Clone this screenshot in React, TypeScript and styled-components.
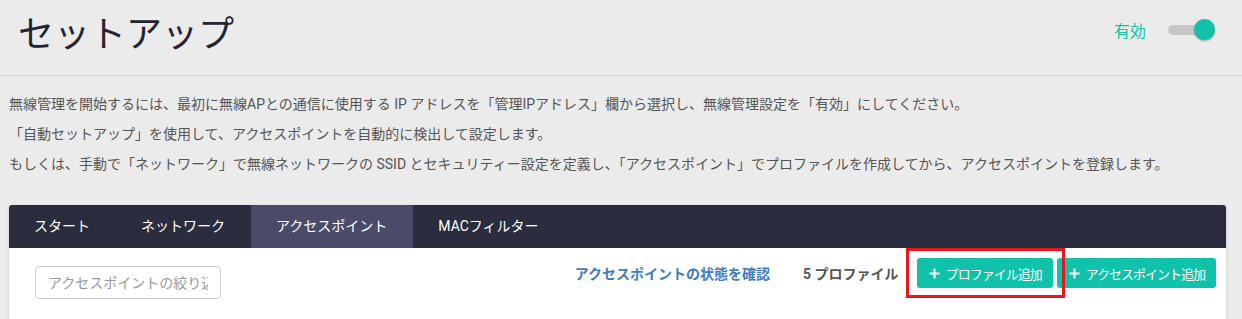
import React, { useState } from "react";
import styled, { createGlobalStyle } from "styled-components";

const GlobalStyle = createGlobalStyle`
    body {
        margin: 0;
        background: #ebebeb;
        font-family: Roboto, "Noto Sans CJK JP", sans-serif;
        color: #555;
    }
`;

const Header = styled.header`
    height: 75px;
    display: flex;
    justify-content: space-between;
    align-items: flex-start;
    border-bottom: 1px solid #cdcdcd;
    padding: 0 26px 0 18px;
`;

const Title = styled.h1`
    margin: 17px 0 0;
    font-size: 36px;
    line-height: 36px;
    font-weight: 400;
    color: #232333;
`;

const ToggleGroup = styled.div`
    display: flex;
    align-items: center;
    gap: 22px;
    margin-top: 19px;
    height: 22px;
`;

const ToggleLabel = styled.span`
    font-size: 16px;
    color: #17bfa5;
`;

const Switch = styled.div`
    position: relative;
    width: 48px;
    height: 22px;
    cursor: pointer;
`;

const Track = styled.div<{ $on: boolean }>`
    position: absolute;
    left: 0;
    top: 6px;
    width: 45px;
    height: 10px;
    border-radius: 5px;
    background: #c6c6c6;
`;

const Knob = styled.div<{ $on: boolean }>`
    position: absolute;
    top: 0;
    left: ${(p) => (p.$on ? "26px" : "0")};
    width: 21px;
    height: 21px;
    border-radius: 50%;
    background: ${(p) => (p.$on ? "#10c2a9" : "#fafafa")};
    box-shadow: 0 1px 2px rgba(0, 0, 0, 0.35);
`;

const Intro = styled.div`
    padding: 13px 9px 0;
    font-size: 14px;
    line-height: 30px;
    color: #555;
`;

const Line = styled.p`
    margin: 0;
    white-space: nowrap;
`;

const Card = styled.section`
    margin: 26px 16px 0 9px;
    background: #fff;
    border-radius: 3px 3px 0 0;
    box-shadow: 0 1px 3px rgba(0, 0, 0, 0.18);
    min-height: 130px;
    overflow: hidden;
`;

const TabBar = styled.nav`
    display: flex;
    height: 43px;
    background: #2b2c3e;
`;

const Tab = styled.div<{ $active?: boolean }>`
    padding: 0 26px 0 25px;
    line-height: 43px;
    font-size: 14px;
    color: #fff;
    background: ${(p) => (p.$active ? "#494b69" : "transparent")};
    cursor: pointer;
`;

const Toolbar = styled.div`
    display: flex;
    align-items: flex-start;
    padding: 10px 10px 0 26px;
`;

const Search = styled.input`
    box-sizing: border-box;
    margin-top: 8px;
    width: 186px;
    height: 33px;
    padding: 0 12px;
    border: 1px solid #ccc;
    border-radius: 4px;
    font: inherit;
    font-size: 14px;
    color: #555;
    &::placeholder {
        color: #999;
    }
`;

const Actions = styled.div`
    margin-left: auto;
    display: flex;
    align-items: center;
    height: 30px;
`;

const StatusLink = styled.a`
    font-size: 14px;
    font-weight: 700;
    color: #3d7bbd;
    text-decoration: none;
    margin-right: 33px;
`;

const Count = styled.span`
    font-size: 14px;
    font-weight: 700;
    color: #555;
    margin-right: 18px;
`;

const Highlight = styled.div`
    position: relative;
    margin-right: 4px;
    &::after {
        content: "";
        position: absolute;
        left: -11px;
        right: -12px;
        top: -10px;
        bottom: -10px;
        border: 3px solid #e8151f;
        pointer-events: none;
        z-index: 2;
    }
`;

const AddButton = styled.button`
    display: flex;
    align-items: center;
    gap: 6px;
    height: 30px;
    padding: 0 11px 0 12px;
    border: none;
    border-radius: 3px;
    background: #10c2a9;
    color: #fff;
    font: inherit;
    font-size: 13px;
    letter-spacing: -1px;
    cursor: pointer;
    white-space: nowrap;
`;

const PlusIcon = () => (
    <svg width="11" height="11" viewBox="0 0 11 11">
        <path d="M5.5 0.5v10M0.5 5.5h10" stroke="#fff" strokeWidth="2" />
    </svg>
);

const tabs = ["スタート", "ネットワーク", "アクセスポイント", "MACフィルター"];

const App = () => {
    const [enabled, setEnabled] = useState(true);
    const [activeTab, setActiveTab] = useState(2);

    return (
        <>
            <GlobalStyle />
            <Header>
                <Title>セットアップ</Title>
                <ToggleGroup>
                    <ToggleLabel>有効</ToggleLabel>
                    <Switch onClick={() => setEnabled(!enabled)}>
                        <Track $on={enabled} />
                        <Knob $on={enabled} />
                    </Switch>
                </ToggleGroup>
            </Header>
            <Intro>
                <Line>
                    無線管理を開始するには、最初に無線APとの通信に使用する IP アドレスを「管理IPアドレス」欄から選択し、無線管理設定を「有効」にしてください。
                </Line>
                <Line>「自動セットアップ」を使用して、アクセスポイントを自動的に検出して設定します。</Line>
                <Line>
                    もしくは、手動で「ネットワーク」で無線ネットワークの SSID とセキュリティー設定を定義し、「アクセスポイント」でプロファイルを作成してから、アクセスポイントを登録します。
                </Line>
            </Intro>
            <Card>
                <TabBar>
                    {tabs.map((t, i) => (
                        <Tab key={t} $active={i === activeTab} onClick={() => setActiveTab(i)}>
                            {t}
                        </Tab>
                    ))}
                </TabBar>
                <Toolbar>
                    <Search placeholder="アクセスポイントの絞り込み" />
                    <Actions>
                        <StatusLink href="#">アクセスポイントの状態を確認</StatusLink>
                        <Count>5 プロファイル</Count>
                        <Highlight>
                            <AddButton>
                                <PlusIcon />
                                プロファイル追加
                            </AddButton>
                        </Highlight>
                        <AddButton>
                            <PlusIcon />
                            アクセスポイント追加
                        </AddButton>
                    </Actions>
                </Toolbar>
            </Card>
        </>
    );
};

export default App;
